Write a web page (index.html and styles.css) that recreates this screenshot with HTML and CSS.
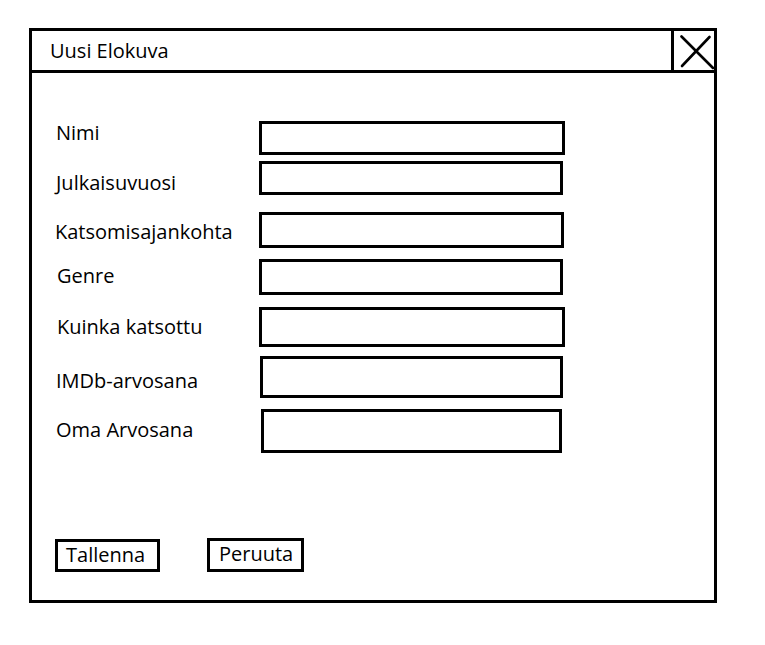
FILE: index.html
```html
<!DOCTYPE html>
<html lang="fi">
<head>
<meta charset="utf-8">
<title>Uusi Elokuva</title>
<link rel="stylesheet" href="styles.css">
</head>
<body>
<div class="window">
  <div class="titlebar">
    <div class="title">Uusi Elokuva</div>
    <div class="close">
      <svg width="40" height="39" viewBox="0 0 40 39">
        <line x1="7.5" y1="5.5" x2="39" y2="37" stroke="#000" stroke-width="2.6" stroke-linecap="round"/>
        <line x1="8" y1="35" x2="35.5" y2="6" stroke="#000" stroke-width="2.6" stroke-linecap="round"/>
      </svg>
    </div>
  </div>
  <div class="content">
    <div class="form">
      <div class="field r1"><span class="label">Nimi</span><span class="box"></span></div>
      <div class="field r2"><span class="label">Julkaisuvuosi</span><span class="box"></span></div>
      <div class="field r3"><span class="label">Katsomisajankohta</span><span class="box"></span></div>
      <div class="field r4"><span class="label">Genre</span><span class="box"></span></div>
      <div class="field r5"><span class="label">Kuinka katsottu</span><span class="box"></span></div>
      <div class="field r6"><span class="label">IMDb-arvosana</span><span class="box"></span></div>
      <div class="field r7"><span class="label">Oma Arvosana</span><span class="box"></span></div>
    </div>
    <div class="buttons">
      <div class="btn save">Tallenna</div>
      <div class="btn cancel">Peruuta</div>
    </div>
  </div>
</div>
</body>
</html>
```

FILE: styles.css
```css
* { box-sizing: border-box; }

html, body {
  margin: 0;
  padding: 0;
  background: #fff;
}

body {
  font-family: "Open Sans", "Noto Sans", sans-serif;
  font-size: 20px;
  line-height: 20px;
  color: #000;
  padding: 28px 0 0 29px;
}

.window {
  width: 688px;
  height: 575px;
  border: 3px solid #000;
  display: flex;
  flex-direction: column;
}

.titlebar {
  height: 42px;
  border-bottom: 3px solid #000;
  display: flex;
  flex: none;
}

.title {
  flex: 1;
  padding: 10px 0 0 18px;
}

.close {
  width: 43px;
  border-left: 3px solid #000;
}

.close svg { display: block; }

.content {
  flex: 1;
  display: flex;
  flex-direction: column;
}

.form {
  display: flex;
  flex-direction: column;
  padding-top: 48px;
}

.field {
  display: flex;
  align-items: flex-start;
  margin-top: var(--gap);
  height: var(--h);
}

.r1 { --gap: 0px;  --h: 34px; --lt: 2px;  --lx: 24px; --bx: 0px; --w: 306px; }
.r2 { --gap: 6px;  --h: 34px; --lt: 12px; --lx: 24px; --bx: 0px; --w: 304px; }
.r3 { --gap: 17px; --h: 36px; --lt: 10px; --lx: 23px; --bx: 0px; --w: 305px; }
.r4 { --gap: 11px; --h: 36px; --lt: 7px;  --lx: 25px; --bx: 0px; --w: 304px; }
.r5 { --gap: 12px; --h: 40px; --lt: 10px; --lx: 25px; --bx: 0px; --w: 306px; }
.r6 { --gap: 9px;  --h: 42px; --lt: 15px; --lx: 24px; --bx: 1px; --w: 303px; }
.r7 { --gap: 11px; --h: 44px; --lt: 11px; --lx: 24px; --bx: 2px; --w: 301px; }

.label {
  width: 227px;
  padding-left: var(--lx);
  margin-top: var(--lt);
  white-space: nowrap;
}

.box {
  margin-left: var(--bx);
  width: var(--w);
  height: var(--h);
  border: 3px solid #000;
}

.buttons {
  display: flex;
  align-items: flex-start;
  margin-top: 85px;
  padding-left: 23px;
}

.btn {
  border: 3px solid #000;
  white-space: nowrap;
}

.save {
  width: 105px;
  height: 33px;
  margin-top: 1px;
  padding: 3px 0 0 8px;
}

.cancel {
  width: 97px;
  height: 34px;
  margin-left: 47px;
  padding: 3px 0 0 9px;
}
```
